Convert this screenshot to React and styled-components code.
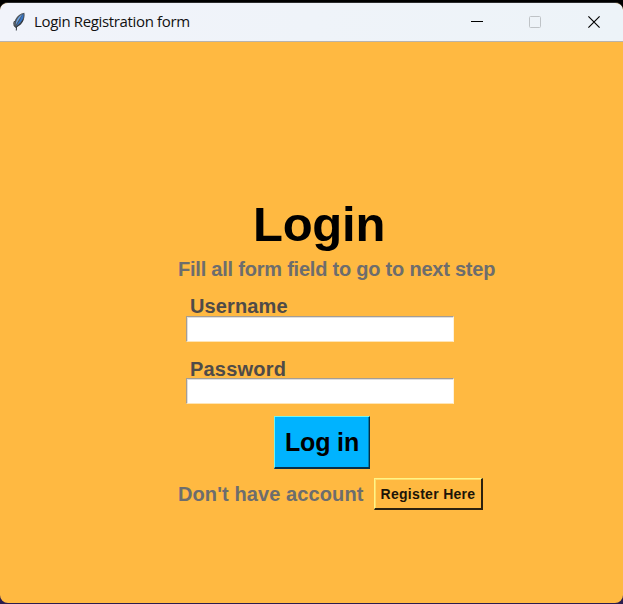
import React from "react";
import styled, { createGlobalStyle } from "styled-components";

const GlobalStyle = createGlobalStyle`
  * { box-sizing: border-box; }
  body { margin: 0; background: #000; overflow: hidden; }
`;

const Desktop = styled.div`
  width: 623px;
  height: 604px;
  padding: 2px 0 1px;
  background: linear-gradient(#000 0 50%, #2b1d4d 50%);
`;

const Window = styled.div`
  display: flex;
  flex-direction: column;
  height: 601px;
  border-top: 1px solid #2c2c2e;
  border-radius: 8px;
  overflow: hidden;
  background: #ffb941;
  font-family: "Liberation Sans", Arial, sans-serif;
`;

const TitleBar = styled.header`
  display: flex;
  align-items: center;
  height: 39px;
  flex: none;
  padding-left: 12px;
  border-bottom: 1px solid #b9b3ab;
  background: linear-gradient(90deg, #f1f3fa, #edf3f8);
`;

const Title = styled.span`
  flex: 1;
  margin: 0 0 2px 8px;
  font: 15px/20px "Open Sans", "Noto Sans", sans-serif;
  letter-spacing: -0.35px;
  color: #111;
  white-space: nowrap;
`;

const Controls = styled.div`
  display: flex;
  height: 100%;
`;

const Control = styled.button`
  display: grid;
  place-items: center;
  width: 58.5px;
  padding: 0;
  border: 0;
  background: none;
  color: ${(p) => (p.disabled ? "#bfc3c7" : "#000")};
`;

const Content = styled.main`
  display: flex;
  flex-direction: column;
  align-items: flex-start;
  padding: 154px 0 0 178px;
`;

const Text = styled.div`
  font-weight: bold;
  font-size: ${(p) => p.$size}px;
  line-height: ${(p) => p.$line}px;
  letter-spacing: ${(p) => p.$spacing || 0}px;
  color: ${(p) => p.$color};
  white-space: nowrap;
`;

const Heading = styled(Text)`
  margin: 0 0 0 75px;
`;

const Hint = styled(Text)`
  margin-top: 5px;
`;

const Field = styled.label`
  display: block;
  margin: ${(p) => p.$top}px 0 0 8px;
`;

const Label = styled(Text)`
  height: ${(p) => p.$height}px;
  padding-left: 4px;
`;

const Input = styled.input`
  display: block;
  width: 268px;
  height: 26px;
  padding: 0 4px;
  border: 1px solid;
  border-color: #a49d94 #fff2d8 #ffe5b5 #a49d94;
  border-radius: 0;
  outline: 0;
  background: #fff;
  box-shadow: inset 1px 1px #dfdfdf;
`;

const Button = styled.button`
  display: grid;
  place-items: center;
  flex: none;
  padding: 0;
  border-style: solid;
  border-radius: 0;
`;

const LoginButton = styled(Button)`
  width: 96px;
  height: 53px;
  margin: 12px 0 0 96px;
  border-width: 1px 1px 2px 1px;
  border-color: #70f5f2 #06304a #06304a #70f5f2;
  background: #00b3ff;
  box-shadow: inset -1px 0 #007fae;
`;

const RegisterButton = styled(Button)`
  width: 109px;
  height: 32px;
  border-width: 1px 2px 2px 1px;
  border-color: #fff487 #2c210e #2c210e #fff487;
  background: #ffb941;
  box-shadow: inset 1px 1px #ffdc68;
`;

const SignupRow = styled.div`
  display: flex;
  align-items: center;
  justify-content: space-between;
  width: 305px;
  margin-top: 9px;
`;

function Feather() {
  return (
    <svg width="14" height="20" viewBox="0 0 14 20">
      <path d="M12.3.8C8.4 1.3 5.2 4 3.3 7.5 2 10 1.8 13 3 15.3l1.1.2C8 14.1 10.8 10.8 12 7c.6-2.2.9-4.4.3-6.2Z" fill="#4c535b" />
      <path d="M11.4 1.7C10 3 9.2 5 8.2 7.5 7 10 5 12.4 4.1 14c3.4-2 5.7-4.8 6.8-7.5.6-1.7.7-3.4.5-4.8Z" fill="#3474c8" />
      <path d="M10.4 2C6.6 4.2 3.8 8 3.8 13 5.5 9.5 7.7 6.5 10.4 2Z" fill="#6fa2e0" />
      <path d="M11.2 7.5 9.3 11 6.5 13.5 4.5 14.8 4.3 18.5M2.5 9 1.8 11l.4 3 1.6 1.4" fill="none" stroke="#30353c" strokeWidth="1" />
    </svg>
  );
}

const Minimize = () => (
  <svg width="12" height="12"><path d="M0 5.5h12" stroke="currentColor" /></svg>
);
const Maximize = () => (
  <svg width="12" height="12"><rect x=".5" y=".5" width="11" height="11" rx="1" fill="none" stroke="currentColor" /></svg>
);
const Close = () => (
  <svg width="12" height="12"><path d="m.4.4 11.2 11.2M11.6.4.4 11.6" stroke="currentColor" strokeWidth="1.15" /></svg>
);

export default function App() {
  return (
    <Desktop>
      <GlobalStyle />
      <Window>
        <TitleBar>
          <Feather />
          <Title>Login Registration form</Title>
          <Controls>
            <Control aria-label="Minimize"><Minimize /></Control>
            <Control aria-label="Maximize" disabled><Maximize /></Control>
            <Control aria-label="Close"><Close /></Control>
          </Controls>
        </TitleBar>
        <Content>
          <Heading as="h1" $size={49} $line={56} $spacing={-0.25} $color="#000">Login</Heading>
          <Hint $size={20} $line={24} $spacing={-0.22} $color="#6d6d6d">Fill all form field to go to next step</Hint>
          <Field $top={15}>
            <Label $height={20} $size={20} $line={21} $spacing={0.12} $color="#4f4b48">Username</Label>
            <Input />
          </Field>
          <Field $top={17}>
            <Label $height={19} $size={20} $line={21} $spacing={0.2} $color="#4f4b48">Password</Label>
            <Input type="password" />
          </Field>
          <LoginButton><Text $size={25} $line={28} $spacing={-0.15} $color="#000">Log in</Text></LoginButton>
          <SignupRow>
            <Text $size={20} $line={24} $spacing={0.1} $color="#6d6d6d">Don't have account</Text>
            <RegisterButton><Text $size={14} $line={16} $spacing={0.3} $color="#1c1508">Register Here</Text></RegisterButton>
          </SignupRow>
        </Content>
      </Window>
    </Desktop>
  );
}
